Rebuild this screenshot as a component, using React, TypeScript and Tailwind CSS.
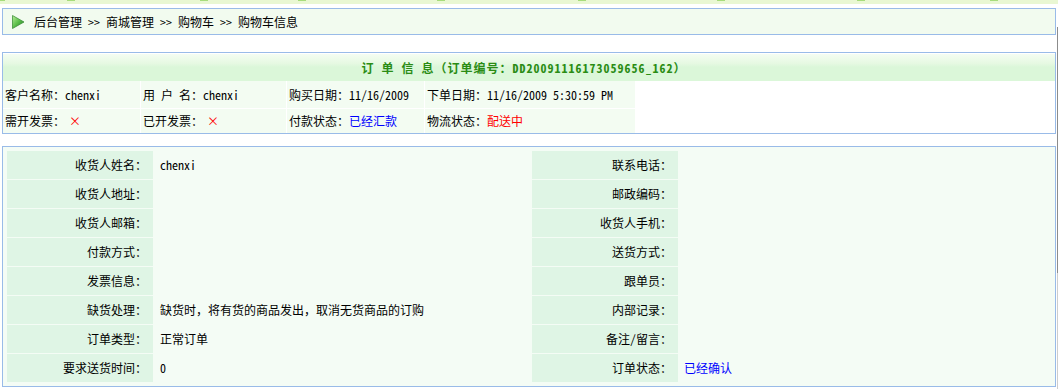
import React from "react";

const labelCls = "bg-[#dff5e5] flex items-center justify-end pr-[6px] h-[28px]";
const valueCls = "flex items-center h-[28px]";

const rows: [string, React.ReactNode, string, React.ReactNode][] = [
  ["收货人姓名：", "chenxi", "联系电话：", ""],
  ["收货人地址：", "", "邮政编码：", ""],
  ["收货人邮箱：", "", "收货人手机：", ""],
  ["付款方式：", "", "送货方式：", ""],
  ["发票信息：", "", "跟单员：", ""],
  ["缺货处理：", "缺货时，将有货的商品发出，取消无货商品的订购", "内部记录：", ""],
  ["订单类型：", "正常订单", "备注/留言：", ""],
  ["要求送货时间：", "0", "订单状态：", <span className="text-[#0000ff]">已经确认</span>],
];

function PlayIcon() {
  return (
    <svg width="14" height="14" viewBox="0 0 14 14">
      <defs>
        <linearGradient id="pg" x1="0" y1="0" x2="1" y2="1">
          <stop offset="0" stopColor="#b6ee98" />
          <stop offset="0.5" stopColor="#5cbf4a" />
          <stop offset="1" stopColor="#1f7a25" />
        </linearGradient>
      </defs>
      <polygon points="1.5,0.5 13,7 1.5,13.5" fill="url(#pg)" stroke="#3f8f3a" strokeWidth="0.8" />
    </svg>
  );
}

export default function App() {
  return (
    <div className="relative w-[1058px] h-[389px] overflow-hidden bg-white text-[12px] leading-none text-black font-['Noto_Sans_Mono_CJK_SC','Noto_Sans_CJK_SC',monospace]">
      {/* top decorative strip */}
      <div className="relative h-[4px] bg-[#e9f7d3]">
        <div className="absolute top-0 left-0 h-[1px] w-[5px] bg-[#a6dc7c]" />
        <div className="absolute top-0 left-[67px] h-[1px] w-[8px] bg-[#a6dc7c]" />
        <div className="absolute top-0 left-[200px] h-[1px] w-[8px] bg-[#a6dc7c]" />
        <div className="absolute top-0 left-[298px] h-[1px] w-[8px] bg-[#a6dc7c]" />
        <div className="absolute top-0 left-[437px] h-[1px] w-[8px] bg-[#a6dc7c]" />
        <div className="absolute top-0 left-[578px] h-[1px] w-[8px] bg-[#a6dc7c]" />
        <div className="absolute top-0 left-[717px] h-[1px] w-[8px] bg-[#a6dc7c]" />
        <div className="absolute top-0 left-[857px] h-[1px] w-[8px] bg-[#a6dc7c]" />
        <div className="absolute top-0 left-[990px] h-[1px] w-[8px] bg-[#a6dc7c]" />
      </div>

      {/* breadcrumb */}
      <div className="mx-[2px] mt-[4px] h-[27px] border border-[#99bbe8] bg-[#f2fbef] flex items-center pl-[8px]">
        <PlayIcon />
        <span className="ml-[9px]">后台管理 &gt;&gt; 商城管理 &gt;&gt; 购物车 &gt;&gt; 购物车信息</span>
      </div>

      {/* order info */}
      <div className="mx-[2px] mt-[17px] border border-[#99bbe8] pt-[1px] bg-white">
        <div className="h-[27px] flex items-center justify-center bg-[linear-gradient(to_bottom,#f4fdf2_0%,#e6f9e2_35%,#dbf7d9_48%,#dbf7d9_100%)]">
          <span className="font-bold text-[#2a8c14] tracking-[1px] ml-[-10px]">订 单 信 息（订单编号：DD20091116173059656_162）</span>
        </div>
        <div className="flex gap-[1px] h-[27px]">
          <div className="w-[137px] bg-[#f3fcf2] flex items-center pl-[2px]">客户名称：chenxi</div>
          <div className="w-[145px] bg-[#f3fcf2] flex items-center pl-[2px]">用&nbsp;户&nbsp;名：chenxi</div>
          <div className="w-[137px] bg-[#f3fcf2] flex items-center pl-[2px]">购买日期：11/16/2009</div>
          <div className="w-[210px] bg-[#f3fcf2] flex items-center pl-[2px]">下单日期：11/16/2009 5:30:59 PM</div>
        </div>
        <div className="flex gap-[1px] h-[24px] mt-[1px]">
          <div className="w-[137px] bg-[#f3fcf2] flex items-center pl-[2px]">需开发票：<span className="text-[#ff0000] ml-[4px]">×</span></div>
          <div className="w-[145px] bg-[#f3fcf2] flex items-center pl-[2px]">已开发票：<span className="text-[#ff0000] ml-[4px]">×</span></div>
          <div className="w-[137px] bg-[#f3fcf2] flex items-center pl-[2px]">付款状态：<span className="text-[#0000ff]">已经汇款</span></div>
          <div className="w-[210px] bg-[#f3fcf2] flex items-center pl-[2px]">物流状态：<span className="text-[#ff0000]">配送中</span></div>
        </div>
      </div>

      {/* receiver details */}
      <div className="mx-[2px] mt-[12px] border border-[#99bbe8] bg-[#f4fcf5] p-[4px]">
        <div className="grid grid-cols-[146px_377px_146px_1fr] gap-[1px]">
          {rows.map(([l1, v1, l2, v2], i) => (
            <React.Fragment key={i}>
              <div className={labelCls}>{l1}</div>
              <div className={`${valueCls} pl-[6px]`}>{v1}</div>
              <div className={labelCls}>{l2}</div>
              <div className={`${valueCls} pl-[5px]`}>{v2}</div>
            </React.Fragment>
          ))}
        </div>
      </div>

      {/* partial scrollbar at the right edge */}
      <div className="absolute right-0 top-[27px] h-[246px] w-[1px] bg-[#8c8c8c]" />
      <div className="absolute right-0 top-[273px] h-[116px] w-[1px] bg-[#cdcdcd]" />
    </div>
  );
}
